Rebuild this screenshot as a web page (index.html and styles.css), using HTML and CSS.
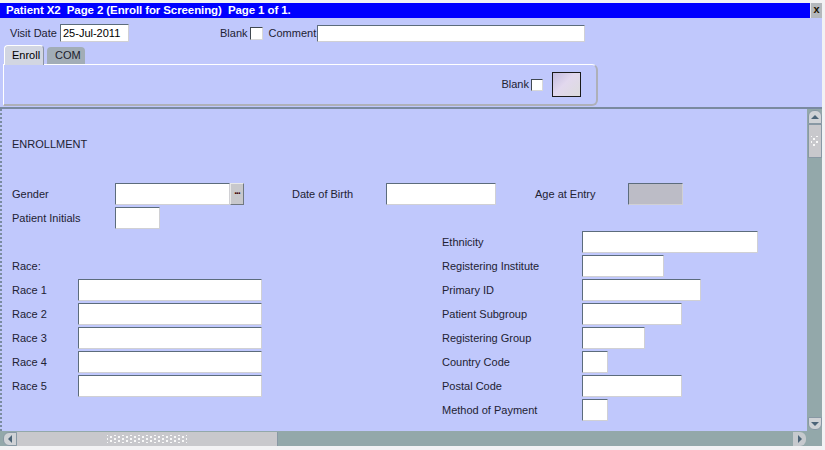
FILE: index.html
```html
<!DOCTYPE html>
<html>
<head>
<meta charset="utf-8">
<title>Patient X2 Enroll</title>
<link rel="stylesheet" href="styles.css">
</head>
<body>
<div class="window">
  <div class="titlebar">
    <div class="title">Patient X2  Page 2 (Enroll for Screening)  Page 1 of 1.</div>
    <div class="close">x</div>
  </div>

  <div class="toprow">
    <span class="lbl visit-lbl">Visit Date</span>
    <input class="fld date" type="text" value="25-Jul-2011">
    <span class="lbl blank-lbl">Blank</span>
    <span class="chk"></span>
    <span class="lbl comment-lbl">Comment</span>
    <input class="fld comment" type="text">
  </div>

  <div class="tabs">
    <div class="tab active">Enroll</div>
    <div class="tab">COM</div>
  </div>
  <div class="tabpanel">
    <span class="lbl">Blank</span>
    <span class="chk small"></span>
    <span class="imgbox"></span>
  </div>
  <div class="separator"></div>

  <div class="main">
    <div class="canvas">
      <div class="content">
        <div class="heading">ENROLLMENT</div>

        <div class="row">
          <span class="lbl l103">Gender</span>
          <input class="fld w115" type="text">
          <span class="lov">...</span>
          <span class="lbl l94 ml48">Date of Birth</span>
          <input class="fld w110" type="text">
          <span class="lbl l93 ml39">Age at Entry</span>
          <span class="fld ro w55"></span>
        </div>
        <div class="row">
          <span class="lbl l103">Patient Initials</span>
          <input class="fld w45" type="text">
        </div>

        <div class="cols">
          <div class="col-left">
            <div class="row"></div>
            <div class="row"><span class="lbl">Race:</span></div>
            <div class="row"><span class="lbl l66">Race 1</span><input class="fld w184" type="text"></div>
            <div class="row"><span class="lbl l66">Race 2</span><input class="fld w184" type="text"></div>
            <div class="row"><span class="lbl l66">Race 3</span><input class="fld w184" type="text"></div>
            <div class="row"><span class="lbl l66">Race 4</span><input class="fld w184" type="text"></div>
            <div class="row"><span class="lbl l66">Race 5</span><input class="fld w184" type="text"></div>
          </div>
          <div class="col-right">
            <div class="row"><span class="lbl l140">Ethnicity</span><input class="fld w176" type="text"></div>
            <div class="row"><span class="lbl l140">Registering Institute</span><input class="fld w82" type="text"></div>
            <div class="row"><span class="lbl l140">Primary ID</span><input class="fld w119" type="text"></div>
            <div class="row"><span class="lbl l140">Patient Subgroup</span><input class="fld w100" type="text"></div>
            <div class="row"><span class="lbl l140">Registering Group</span><input class="fld w63" type="text"></div>
            <div class="row"><span class="lbl l140">Country Code</span><input class="fld w26" type="text"></div>
            <div class="row"><span class="lbl l140">Postal Code</span><input class="fld w100" type="text"></div>
            <div class="row"><span class="lbl l140">Method of Payment</span><input class="fld w26" type="text"></div>
          </div>
        </div>
      </div>

      <div class="vscroll">
        <div class="vbtn up">
          <svg width="10" height="6" viewBox="0 0 10 6"><polygon points="1,5 5,1 9,5" fill="#4c6478"/></svg>
        </div>
        <div class="vthumb"><span class="vdots"></span></div>
        <div class="vtrack"></div>
        <div class="vbtn down">
          <svg width="10" height="6" viewBox="0 0 10 6"><polygon points="1,1 5,5 9,1" fill="#4c6478"/></svg>
        </div>
      </div>
    </div>

    <div class="hscroll">
      <div class="hbtn left">
        <svg width="6" height="10" viewBox="0 0 6 10"><polygon points="5,1 1,5 5,9" fill="#4c6478"/></svg>
      </div>
      <div class="hthumb"><span class="hdots"></span></div>
      <div class="htrack"></div>
      <div class="hbtn right">
        <svg width="6" height="10" viewBox="0 0 6 10"><polygon points="1,1 5,5 1,9" fill="#4c6478"/></svg>
      </div>
      <div class="hcorner"></div>
    </div>
  </div>
</div>
</body>
</html>
```

FILE: styles.css
```css
* { box-sizing: border-box; }

body {
  margin: 0;
  background: #f2f2f4;
  font-family: "Liberation Sans", Arial, sans-serif;
  font-size: 11px;
  color: #222233;
}

.window {
  width: 822px;
  height: 443px;
  margin-top: 3px;
  background: #c0c8fc;
  display: flex;
  flex-direction: column;
}

/* title bar */
.titlebar {
  height: 15px;
  display: flex;
}
.title {
  flex: 1;
  background: #0000ff;
  color: #ffffff;
  font-weight: bold;
  font-size: 11.5px;
  letter-spacing: -0.1px;
  line-height: 15px;
  padding-left: 6px;
  white-space: pre;
}
.close {
  width: 12px;
  background: #b4b8bc;
  border-left: 1px solid #e8e8e8;
  color: #1a1200;
  font-weight: bold;
  font-size: 11px;
  line-height: 13px;
  text-align: center;
}

/* header row */
.toprow {
  margin-top: 6px;
  height: 18px;
  display: flex;
  align-items: center;
  padding-left: 10px;
}
.lbl {
  white-space: nowrap;
  line-height: 21px;
}
.visit-lbl { width: 50px; }
.blank-lbl { margin-left: 91px; }
.comment-lbl { margin-left: 6px; width: 48px; }

.fld {
  display: block;
  height: 22px;
  margin: 0;
  padding: 0 3px;
  background: #ffffff;
  border: 1px solid;
  border-color: #5c6c7c #d0d0d4 #d0d0d4 #5c6c7c;
  border-radius: 1px;
  font: inherit;
  color: #000000;
  outline: none;
}
.fld.date {
  width: 69px;
  height: 18px;
  padding-left: 2px;
}
.fld.comment {
  width: 268px;
  height: 17px;
}
.fld.ro {
  background: #bcbcc6;
}

.chk {
  display: inline-block;
  width: 13px;
  height: 13px;
  margin-left: 2px;
  background: #ffffff;
  border: 1px solid;
  border-color: #404850 #d8d8d8 #d8d8d8 #404850;
}
.chk.small {
  width: 12px;
  height: 12px;
}

/* tabs */
.tabs {
  margin-top: 3px;
  height: 19px;
  display: flex;
  align-items: flex-end;
  padding-left: 4px;
  position: relative;
  z-index: 1;
}
.tab {
  height: 17px;
  padding: 0 7px;
  margin-right: 3px;
  line-height: 16px;
  background: #a2adb6;
  border-radius: 4px 4px 0 0;
  color: #1c1c2c;
}
.tab.active {
  height: 20px;
  margin-bottom: -1px;
  width: 40px;
  background: #d2d6e2;
  border-top: 1px solid #ffffff;
  border-left: 1px solid #ffffff;
  border-right: 1px solid #8c94a4;
  line-height: 18px;
  color: #000000;
}
.tab:not(.active) {
  width: 38px;
  padding-left: 8px;
}

.tabpanel {
  margin-left: 3px;
  width: 595px;
  height: 42px;
  border-top: 1px solid #ffffff;
  border-left: 1px solid #ffffff;
  border-right: 2px solid #aeb0b8;
  border-bottom: 2px solid #aeb0b8;
  border-radius: 0 6px 6px 0;
  display: flex;
  align-items: center;
  justify-content: flex-end;
  padding-right: 15px;
}
.imgbox {
  width: 29px;
  height: 25px;
  margin-left: 9px;
  border: 1px solid #1a1a1a;
  background: linear-gradient(135deg, #c4bce0 0%, #e2d8ee 45%, #dcdcdc 100%);
}

.separator {
  margin-top: 1px;
  height: 2px;
  background: #7a8aa0;
}

/* main form area */
.main {
  flex: 1;
  display: flex;
  flex-direction: column;
}
.canvas {
  flex: 1;
  display: flex;
}
.content {
  flex: 1;
  border-left: 2px dotted #7a8ca0;
  padding: 29px 0 0 10px;
}
.heading {
  height: 13px;
  line-height: 13px;
  margin-bottom: 32px;
}
.row {
  display: flex;
  align-items: center;
  height: 22px;
  margin-bottom: 2px;
}

.l66 { width: 66px; }
.l93 { width: 93px; }
.l94 { width: 94px; }
.l103 { width: 103px; }
.l140 { width: 140px; }
.ml39 { margin-left: 39px; }
.ml48 { margin-left: 48px; }

.w26 { width: 26px; }
.w45 { width: 45px; }
.w55 { width: 55px; }
.w63 { width: 63px; }
.w82 { width: 82px; }
.w100 { width: 100px; }
.w110 { width: 110px; }
.w115 { width: 115px; }
.w119 { width: 119px; }
.w176 { width: 176px; }
.w184 { width: 184px; }

.lov {
  width: 14px;
  height: 22px;
  background: #c8c8cc;
  border: 1px solid;
  border-color: #e8e8e8 #707880 #707880 #e8e8e8;
  color: #400000;
  font-weight: bold;
  font-size: 10px;
  line-height: 14px;
  text-align: center;
  letter-spacing: -1px;
}

.cols {
  display: flex;
}
.col-left {
  width: 430px;
}

/* scrollbars */
.vscroll {
  width: 15px;
  display: flex;
  flex-direction: column;
  background: #93a8aa;
  padding: 1px 0 1px 1px;
}
.vbtn {
  height: 14px;
  background: #cfd2d6;
  display: flex;
  align-items: center;
  justify-content: center;
  border: 1px solid #8898a4;
}
.vbtn.up { border-radius: 6px 6px 0 0; }
.vbtn.down { border-radius: 0 0 6px 6px; height: 13px; }
.vthumb {
  height: 34px;
  background: #c8c8cc;
  border: 1px solid #8898a4;
  display: flex;
  align-items: center;
  justify-content: center;
}
.vdots {
  width: 8px;
  height: 10px;
  background-image:
    radial-gradient(circle, #f8f8f8 0.8px, transparent 1.2px),
    radial-gradient(circle, #f8f8f8 0.8px, transparent 1.2px);
  background-size: 6px 6px;
  background-position: 0 0, 3px 3px;
}
.vtrack { flex: 1; }

.hscroll {
  height: 15px;
  display: flex;
  background: #93a8aa;
  padding: 1px 0 0 3px;
}
.hbtn {
  width: 14px;
  height: 14px;
  background: #cfd2d6;
  display: flex;
  align-items: center;
  justify-content: center;
}
.hbtn.left {
  border-radius: 6px 0 0 6px;
  border: 1px solid #8898a4;
}
.hbtn.right {
  width: 13px;
  border-radius: 0 6px 6px 0;
  background: #c6cace;
}
.hthumb {
  width: 261px;
  height: 14px;
  background: #c8c8cc;
  border-right: 1px solid #8898a4;
  display: flex;
  align-items: center;
  justify-content: center;
}
.hdots {
  width: 80px;
  height: 8px;
  background-image:
    radial-gradient(circle, #f8f8f8 0.8px, transparent 1.2px),
    radial-gradient(circle, #f8f8f8 0.8px, transparent 1.2px);
  background-size: 8px 4px;
  background-position: 0 0, 4px 2px;
}
.htrack { flex: 1; }
.hcorner { width: 16px; }
```
